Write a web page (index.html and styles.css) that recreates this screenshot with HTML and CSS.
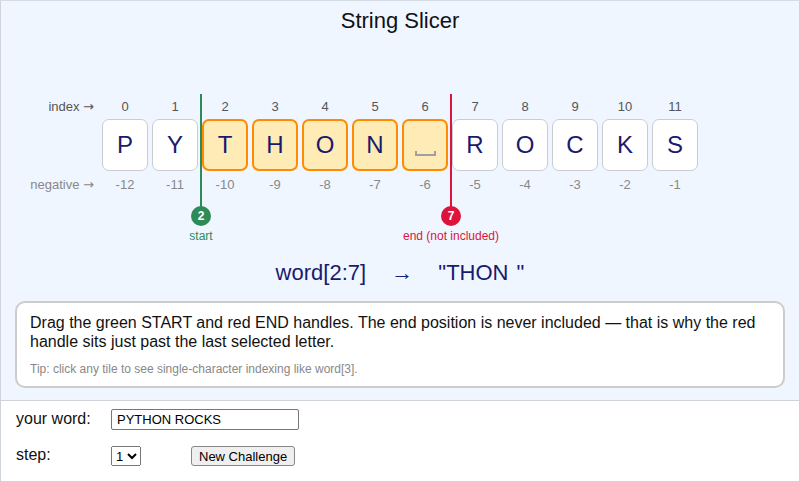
FILE: index.html
```html
<!DOCTYPE html>
<html lang="en">
<head>
    <meta charset="UTF-8">
    <title>String Slicer</title>
    <link rel="stylesheet" href="styles.css">
</head>
<body>
    <div class="app">
        <!-- Slicing board -->
        <div class="board">
            <h1>String Slicer</h1>

            <div class="stage">
                <div class="grid">
                    <div class="row-label">index <span class="to">→</span></div>
                    <div class="num">0</div><div class="num">1</div><div class="num">2</div><div class="num">3</div>
                    <div class="num">4</div><div class="num">5</div><div class="num">6</div><div class="num">7</div>
                    <div class="num">8</div><div class="num">9</div><div class="num">10</div><div class="num">11</div>
                    <div></div>

                    <div></div>
                    <div class="tile">P</div>
                    <div class="tile">Y</div>
                    <div class="tile picked">T</div>
                    <div class="tile picked">H</div>
                    <div class="tile picked">O</div>
                    <div class="tile picked">N</div>
                    <div class="tile picked"><span class="space-mark"></span></div>
                    <div class="tile">R</div>
                    <div class="tile">O</div>
                    <div class="tile">C</div>
                    <div class="tile">K</div>
                    <div class="tile">S</div>
                    <div></div>

                    <div class="row-label neg">negative <span class="to">→</span></div>
                    <div class="num neg">-12</div><div class="num neg">-11</div><div class="num neg">-10</div><div class="num neg">-9</div>
                    <div class="num neg">-8</div><div class="num neg">-7</div><div class="num neg">-6</div><div class="num neg">-5</div>
                    <div class="num neg">-4</div><div class="num neg">-3</div><div class="num neg">-2</div><div class="num neg">-1</div>
                    <div></div>
                </div>

                <!-- drag handles sit over the gaps between tiles -->
                <div class="handle start" style="left: 194px;">
                    <div class="bar"></div>
                    <div class="knob">2</div>
                    <div class="caption">start</div>
                </div>
                <div class="handle end" style="left: 444px;">
                    <div class="bar"></div>
                    <div class="knob">7</div>
                    <div class="caption">end (not included)</div>
                </div>
            </div>

            <div class="result">word[2:7] <span class="arrow">→</span> "THON "</div>

            <div class="note">
                <p>Drag the green START and red END handles. The end position is never included — that is why the red handle sits just past the last selected letter.</p>
                <p class="tip">Tip: click any tile to see single-character indexing like word[3].</p>
            </div>
        </div>

        <!-- Controls -->
        <div class="controls">
            <div class="ctrl-row">
                <label class="ctrl-label">your word:</label>
                <input type="text" class="word-input" value="PYTHON ROCKS">
            </div>
            <div class="ctrl-row">
                <label class="ctrl-label">step:</label>
                <select class="step-select"><option>1</option><option>2</option><option>3</option></select>
                <button class="new-btn">New Challenge</button>
            </div>
        </div>
    </div>
</body>
</html>
```

FILE: styles.css
```css
* {
    margin: 0;
    padding: 0;
    box-sizing: border-box;
}

body {
    width: 800px;
    height: 482px;
    overflow: hidden;
    background: #ffffff;
    font-family: 'Liberation Sans', Arial, sans-serif;
    color: #111;
}

.app {
    width: 800px;
    border-top: 1px solid #d5dbe2;
}

/* Board */
.board {
    background: #eff6ff;
    border-left: 1px solid #cfd4da;
    border-right: 1px solid #cfd4da;
    border-bottom: 1px solid #cfd4da;
    height: 400px;
    padding-top: 7px;
}

h1 {
    font-size: 22px;
    font-weight: normal;
    text-align: center;
    line-height: 26px;
    color: #111;
}

.stage {
    position: relative;
    margin-top: 66px;
    height: 160px;
}

.grid {
    display: grid;
    grid-template-columns: 92px repeat(12, 46px) 92px;
    grid-template-rows: 14px 52px 14px;
    column-gap: 4px;
    row-gap: 5px;
    width: 788px;
    margin-left: 5px;
}

.row-label {
    font-size: 13px;
    line-height: 14px;
    color: #555;
    text-align: right;
    padding-right: 4px;
    white-space: nowrap;
}

.row-label .to {
    font-family: 'DejaVu Sans', sans-serif;
    font-size: 13px;
}

.row-label.neg {
    color: #888;
    margin-top: 2px;
}

.num {
    font-size: 13px;
    line-height: 14px;
    color: #555;
    text-align: center;
}

.num.neg {
    color: #888;
    margin-top: 2px;
}

.tile {
    position: relative;
    background: #fff;
    border: 1px solid #c9cdd2;
    border-radius: 7px;
    display: flex;
    align-items: center;
    justify-content: center;
    font-size: 24px;
    color: #1a1a6e;
}

.tile.picked {
    background: #ffebb5;
    border: 2px solid #ff8c00;
}

.space-mark {
    position: absolute;
    left: 11px;
    bottom: 13px;
    width: 21px;
    height: 5px;
    border: 2px solid #a0a0a0;
    border-top: none;
}

/* Handles */
.handle {
    position: absolute;
    top: -6px;
    width: 12px;
    display: flex;
    flex-direction: column;
    align-items: center;
}

.handle .bar {
    width: 2px;
    height: 113px;
}

.handle .knob {
    width: 20px;
    height: 20px;
    border-radius: 50%;
    color: #fff;
    font-size: 12px;
    font-weight: bold;
    line-height: 20px;
    text-align: center;
    margin-top: -1px;
    flex-shrink: 0;
}

.handle .caption {
    font-size: 12px;
    white-space: nowrap;
    margin-top: 3px;
}

.start .bar, .start .knob { background: #2e8b57; }
.start .caption { color: #2e8b57; }

.end .bar, .end .knob { background: #dc143c; }
.end .caption { color: #dc143c; }

/* Result */
.result {
    text-align: center;
    font-size: 22px;
    line-height: 26px;
    color: #1a1a6e;
    word-spacing: 2px;
}

.result .arrow {
    margin: 0 17px;
}

/* Note box */
.note {
    margin: 15px 14px 0;
    height: 87px;
    background: #fff;
    border: 2px solid #cccccc;
    border-radius: 10px;
    padding: 10px 13px;
}

.note p {
    font-size: 16px;
    line-height: 19px;
    color: #111;
}

.note .tip {
    font-size: 12px;
    color: #888;
    margin-top: 9px;
}

/* Controls */
.controls {
    height: 81px;
    border-left: 1px solid #cfd4da;
    border-right: 1px solid #cfd4da;
    border-bottom: 1px solid #cfd4da;
    padding: 7px 0 0 15px;
}

.ctrl-row {
    display: flex;
    align-items: center;
    height: 22px;
    margin-bottom: 14px;
}

.ctrl-label {
    width: 95px;
    font-size: 16px;
}

.word-input {
    width: 188px;
    height: 21px;
    border: 1px solid #767676;
    border-radius: 2px;
    padding: 1px 5px;
    font-family: 'Liberation Sans', Arial, sans-serif;
    font-size: 13px;
}

.step-select {
    width: 30px;
    height: 20px;
    font-family: 'Liberation Sans', Arial, sans-serif;
    font-size: 13px;
    margin-top: 2px;
}

.new-btn {
    margin-left: 50px;
    height: 20px;
    padding: 0 7px;
    font-family: 'Liberation Sans', Arial, sans-serif;
    font-size: 13px;
    border: 1px solid #888;
    border-radius: 3px;
    background: #efefef;
    margin-top: 2px;
}
```
